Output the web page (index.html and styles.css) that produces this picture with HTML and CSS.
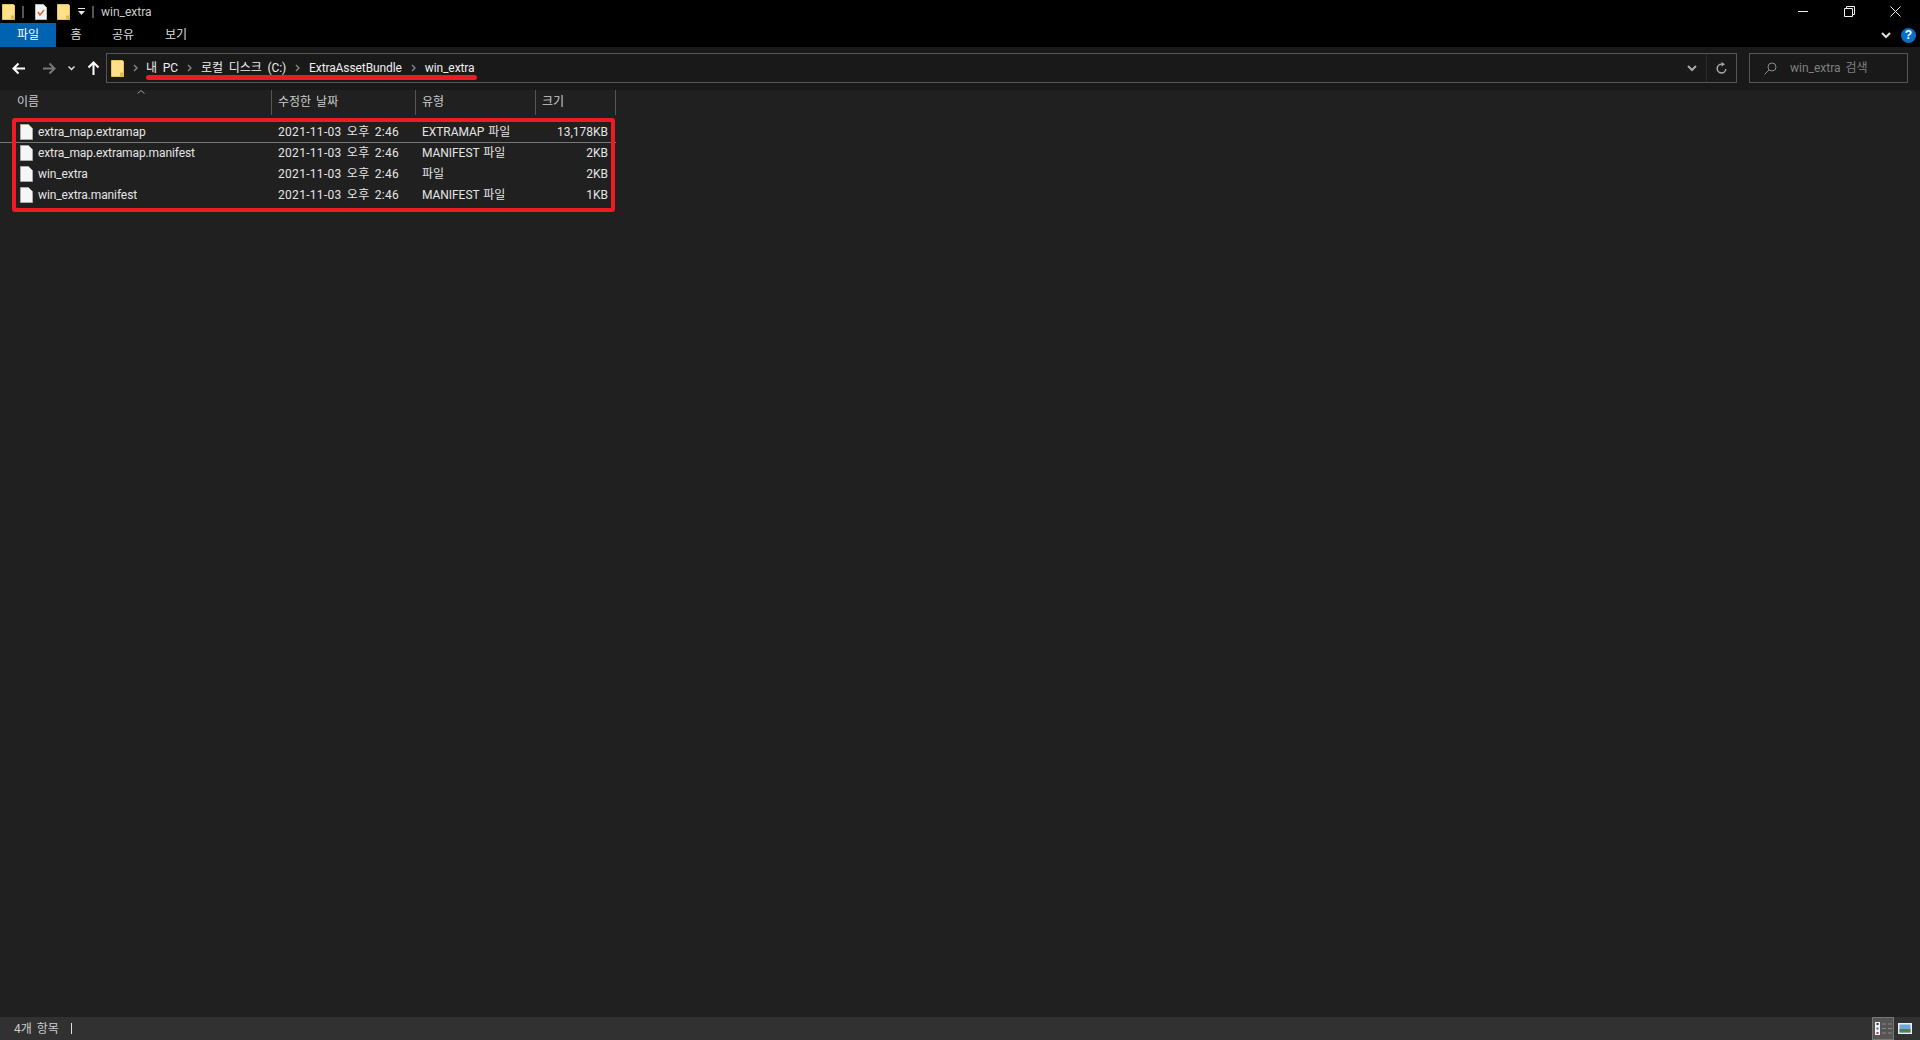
FILE: index.html
```html
<!DOCTYPE html>
<html lang="ko">
<head>
<meta charset="utf-8">
<title>win_extra</title>
<link rel="stylesheet" href="styles.css">
</head>
<body>
<div class="window">
  <header class="titlebar">
    <div class="qat">
      <svg class="ico-folder" width="13" height="16" viewBox="0 0 13 16"><path d="M.5.5h11l1 1v14H.5z" fill="#ffe08a" stroke="#e8c25c"/><path d="M9 15.500v-4h3.500v4z" fill="#e0b84e"/></svg>
      <span class="qat-sep"></span>
      <svg class="ico-props" width="12" height="16" viewBox="0 0 12 16"><path d="M.5.5h8l3 3v12H.5z" fill="#f4f4f4" stroke="#bbb"/><path d="M3 8l2 3 4-5" fill="none" stroke="#e8622a" stroke-width="1.5"/></svg>
      <svg class="ico-folder2" width="13" height="16" viewBox="0 0 13 16"><path d="M.5.5h11l1 1v14H.5z" fill="#ffe08a" stroke="#e8c25c"/><path d="M9 15.500v-4h3.500v4z" fill="#e0b84e"/></svg>
      <svg class="ico-drop" width="7" height="7" viewBox="0 0 7 7"><path d="M0 0h7v1H0zM0 3h7L3.500 7z" fill="#e6e6e6"/></svg>
      <span class="qat-sep qat-sep-last"></span>
      <span class="title">win_extra</span>
    </div>
    <div class="winctl">
      <svg width="11" height="11" viewBox="0 0 11 11"><path d="M0 5.500h10" stroke="#eee" fill="none"/></svg>
      <svg width="11" height="11" viewBox="0 0 11 11"><path d="M.5 2.500h8v8h-8zM2.500 2.500v-2h8v8h-2" stroke="#eee" fill="none"/></svg>
      <svg width="11" height="11" viewBox="0 0 11 11"><path d="M.5.500l10 10M10.500.500l-10 10" stroke="#eee" fill="none"/></svg>
    </div>
  </header>

  <nav class="ribbon">
    <div class="tabs">
      <span class="tab tab-file">파일</span>
      <span class="tab tab-home">홈</span>
      <span class="tab tab-share">공유</span>
      <span class="tab tab-view">보기</span>
    </div>
    <div class="ribbon-right">
      <svg width="10" height="7" viewBox="0 0 10 7"><path d="M1 1l4 4 4-4" stroke="#ddd" stroke-width="2" fill="none"/></svg>
      <span class="help">?</span>
    </div>
  </nav>

  <section class="navbar">
    <div class="navbtns">
      <svg class="nav-back" width="14" height="13" viewBox="0 0 14 13"><path d="M13 6.500H2M6.500 1.500l-5 5 5 5" stroke="#fff" stroke-width="2" fill="none"/></svg>
      <svg class="nav-fwd" width="14" height="13" viewBox="0 0 14 13"><path d="M1 6.500h11M7.500 1.500l5 5-5 5" stroke="#777" stroke-width="2" fill="none"/></svg>
      <svg class="nav-drop" width="7" height="5" viewBox="0 0 7 5"><path d="M.5.500l3 3 3-3" stroke="#ddd" stroke-width="1.500" fill="none"/></svg>
      <svg class="nav-up" width="13" height="14" viewBox="0 0 13 14"><path d="M6.500 14V2M1.500 6.500l5-5 5 5" stroke="#fff" stroke-width="2" fill="none"/></svg>
    </div>
    <div class="address">
      <svg class="addr-folder" width="13" height="17" viewBox="0 0 13 17"><path d="M.5.500h11l1 1v15H.5z" fill="#ffe08a" stroke="#e8c25c"/><path d="M9 16.500v-4h3.500v4z" fill="#e0b84e"/></svg>
      <svg class="chev chev-first" width="5" height="8" viewBox="0 0 5 8"><path d="M1 1l3 3-3 3" stroke="#808080" stroke-width="1.500" fill="none"/></svg>
      <span class="crumb">내 PC</span>
      <svg class="chev" width="5" height="8" viewBox="0 0 5 8"><path d="M1 1l3 3-3 3" stroke="#808080" stroke-width="1.500" fill="none"/></svg>
      <span class="crumb">로컬 디스크 (C:)</span>
      <svg class="chev" width="5" height="8" viewBox="0 0 5 8"><path d="M1 1l3 3-3 3" stroke="#808080" stroke-width="1.500" fill="none"/></svg>
      <span class="crumb">ExtraAssetBundle</span>
      <svg class="chev" width="5" height="8" viewBox="0 0 5 8"><path d="M1 1l3 3-3 3" stroke="#808080" stroke-width="1.500" fill="none"/></svg>
      <span class="crumb">win_extra</span>
      <span class="addr-fill"></span>
      <svg class="addr-drop" width="10" height="7" viewBox="0 0 10 7"><path d="M1 1l4 4 4-4" stroke="#aaa" stroke-width="2" fill="none"/></svg>
      <span class="addr-refresh"><svg width="11" height="12" viewBox="0 0 11 12"><path d="M9.800 7a4.300 4.300 0 1 1-4.300-4.700" stroke="#aaa" stroke-width="1.500" fill="none"/><path d="M5.500 0l3.500 2.300-3.500 2.300z" fill="#aaa"/></svg></span>
      <span class="underline"></span>
    </div>
    <div class="search">
      <svg width="13" height="13" viewBox="0 0 13 13"><circle cx="8" cy="5" r="4" stroke="#888" fill="none"/><path d="M5 8l-4.500 4.500" stroke="#888" fill="none"/></svg>
      <span>win_extra 검색</span>
    </div>
  </section>

  <main class="content">
    <div class="sort-wrap"><svg class="sort" width="8" height="4" viewBox="0 0 8 4"><path d="M.5 3.500l3.500-3 3.500 3" stroke="#999" fill="none"/></svg></div>
    <div class="grid head">
      <span class="h h-name">이름</span>
      <span class="h">수정한 날짜</span>
      <span class="h">유형</span>
      <span class="h">크기</span>
    </div>
    <div class="rows">
      <div class="grid row sel">
        <span class="name"><svg width="13" height="16" viewBox="0 0 13 16"><path d="M.5.500h8l4 4v11H.5z" fill="#f6f6f6" stroke="#aaa"/></svg>extra_map.extramap</span>
        <span class="date">2021-11-03 오후 2:46</span><span class="type">EXTRAMAP 파일</span><span class="size">13,178KB</span>
      </div>
      <div class="grid row">
        <span class="name"><svg width="13" height="16" viewBox="0 0 13 16"><path d="M.5.500h8l4 4v11H.5z" fill="#f6f6f6" stroke="#aaa"/></svg>extra_map.extramap.manifest</span>
        <span class="date">2021-11-03 오후 2:46</span><span class="type">MANIFEST 파일</span><span class="size">2KB</span>
      </div>
      <div class="grid row">
        <span class="name"><svg width="13" height="16" viewBox="0 0 13 16"><path d="M.5.500h8l4 4v11H.5z" fill="#f6f6f6" stroke="#aaa"/></svg>win_extra</span>
        <span class="date">2021-11-03 오후 2:46</span><span class="type">파일</span><span class="size">2KB</span>
      </div>
      <div class="grid row">
        <span class="name"><svg width="13" height="16" viewBox="0 0 13 16"><path d="M.5.500h8l4 4v11H.5z" fill="#f6f6f6" stroke="#aaa"/></svg>win_extra.manifest</span>
        <span class="date">2021-11-03 오후 2:46</span><span class="type">MANIFEST 파일</span><span class="size">1KB</span>
      </div>
      <span class="redbox"></span>
    </div>
  </main>

  <footer class="status">
    <span>4개 항목</span><span class="status-sep"></span>
    <span class="status-fill"></span>
    <span class="view view-on"><svg width="17" height="13" viewBox="0 0 17 13"><path d="M0 0h5v13H0z" fill="#f2f2f2"/><path d="M1.500 1h2v2h-2z" fill="#333"/><path d="M1.500 5.500h2v2h-2z" fill="#3a6ea5"/><path d="M1.500 10h2v2h-2z" fill="#b33"/><path d="M7 2h4M13 2h4M7 6.500h4M13 6.500h4M7 11h4M13 11h4" stroke="#888" fill="none"/></svg></span>
    <span class="view view-thumb"><svg width="14" height="11" viewBox="0 0 14 11"><path d="M0 0h14v11H0z" fill="#eee"/><path d="M1.500 1.500h11v8h-11z" fill="#6fa8d8"/><path d="M1.500 6h11v3.500h-11z" fill="#4f7f5a"/></svg></span>
  </footer>
</div>
</body>
</html>
```

FILE: styles.css
```css
* { box-sizing: border-box; }
html, body { margin: 0; height: 100%; }
body {
  background: #202020;
  color: #e4e4e4;
  font: 12px/16px Roboto, "Noto Sans CJK KR", sans-serif;
  word-spacing: 2px;
  overflow: hidden;
}
.window { display: flex; flex-direction: column; height: 1040px; overflow: hidden; }

.titlebar { height: 23px; background: #000; display: flex; justify-content: space-between; align-items: center; flex: none; }
.qat { display: flex; align-items: center; padding-left: 2px; }
.qat-sep { width: 2px; height: 12px; background: #555; margin-left: 7px; }
.ico-props { margin-left: 11px; }
.ico-folder2 { margin-left: 10px; }
.ico-drop { margin-left: 8px; }
.qat-sep-last { margin-left: 7px; }
.title { margin-left: 7px; color: #ccc; }
.winctl { display: flex; gap: 35px; padding-right: 19px; align-items: center; }
.winctl svg { display: block; }

.ribbon { height: 24px; background: #000; display: flex; justify-content: space-between; align-items: stretch; flex: none; }
.tabs { display: flex; }
.tab { display: flex; align-items: center; justify-content: center; color: #ddd; }
.tab-file { width: 56px; background: #0063b1; color: #fff; }
.tab-home { width: 40px; }
.tab-share { width: 54px; }
.tab-view { width: 52px; }
.ribbon-right { display: flex; align-items: center; gap: 10px; padding-right: 4px; }
.help { width: 15px; height: 15px; border-radius: 50%; background: #0a6fc8; color: #fff; font: 700 12px/15px "Liberation Sans", sans-serif; text-align: center; }

.navbar { height: 43px; background: #191919; display: flex; align-items: flex-start; padding-top: 6px; flex: none; }
.navbtns { width: 106px; height: 30px; display: flex; align-items: center; }
.nav-back { margin-left: 12px; }
.nav-fwd { margin-left: 16px; }
.nav-drop { margin-left: 12px; }
.nav-up { margin-left: 12px; }
.address { width: 1631px; height: 30px; border: 1px solid #555; display: flex; align-items: center; position: relative; padding-left: 4px; color: #eee; word-spacing: 3px; letter-spacing: -0.1px; }
.chev { margin: 0 9px; flex: none; }
.chev-first { margin-right: 8px; }
.addr-fill { flex: 1; }
.addr-drop { margin-right: 9px; }
.addr-refresh { height: 28px; width: 30px; border-left: 1px solid #2a2a2a; display: flex; align-items: center; justify-content: center; }
.underline { position: absolute; left: 39px; top: 21px; width: 331px; height: 5px; border-radius: 3px; background: #ed1c24; }
.search { width: 159px; height: 30px; margin-left: 12px; border: 1px solid #555; display: flex; align-items: center; gap: 13px; padding-left: 14px; color: #808080; }

.content { flex: 1; display: flex; flex-direction: column; background: #202020; position: relative; }
.sort-wrap { position: absolute; left: 137px; top: 0; }
.sort { display: block; }
.grid { display: grid; grid-template-columns: 272px 144px 120px 80px; width: 616px; }
.head { height: 26px; align-items: start; }
.h { height: 25px; line-height: 25px; padding-left: 6px; border-right: 1px solid #555; color: #ccc; }
.h-name { padding-left: 17px; }
.rows { position: relative; width: 616px; margin-top: 5px; }
.row { height: 21px; align-items: center; }
.row > span { padding-left: 6px; white-space: nowrap; }
.row .name { display: flex; align-items: center; gap: 5px; padding-left: 20px; letter-spacing: -0.1px; }
.row .date { word-spacing: 2px; letter-spacing: 0.3px; }
.row .type { word-spacing: 1px; letter-spacing: -0.05px; }
.row .size { padding: 0 8px 0 0; text-align: right; }
.sel { box-shadow: 0 1px 0 #777; }
.redbox { position: absolute; left: 12px; top: -3px; width: 603px; height: 94px; border: 4px solid #ed1c24; border-radius: 3px; pointer-events: none; }

.status { height: 23px; background: #313131; display: flex; align-items: center; padding: 0 8px 0 14px; color: #ccc; flex: none; }
.status-sep { width: 1px; height: 11px; background: #ddd; margin-left: 12px; }
.status-fill { flex: 1; }
.view { height: 23px; display: flex; align-items: center; justify-content: center; }
.view-on { width: 22px; background: #555; border: 1px solid #777; }
.view-thumb { width: 14px; margin-left: 4px; }
```
